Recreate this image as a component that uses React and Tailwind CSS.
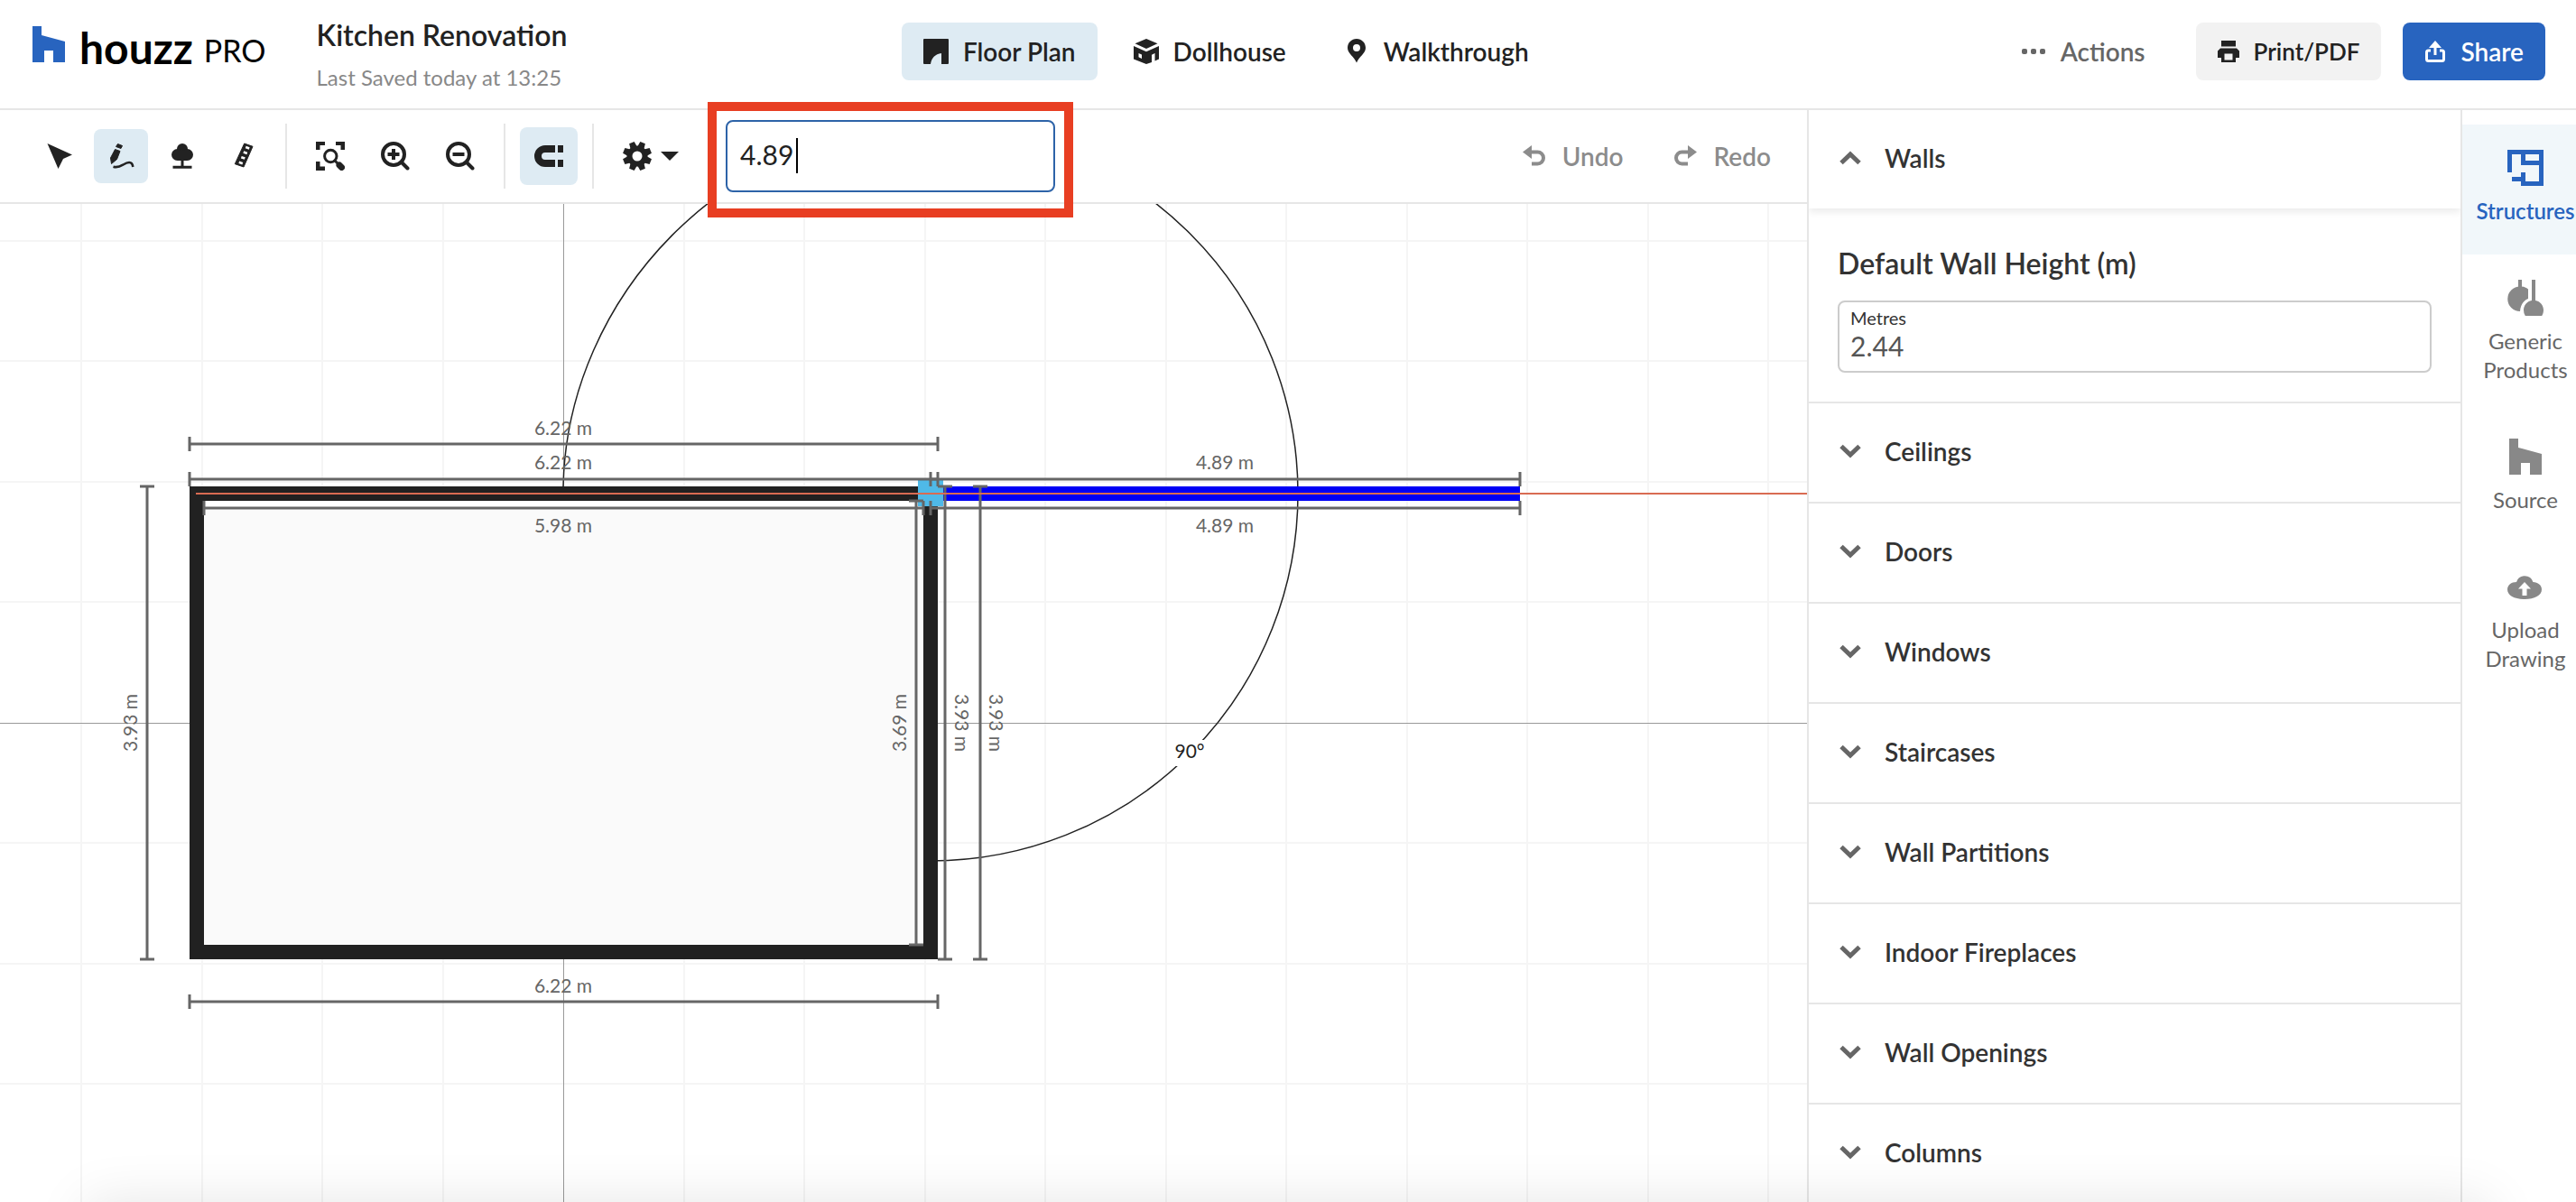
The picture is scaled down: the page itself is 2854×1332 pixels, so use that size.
import React, { useState } from "react";

const SECTIONS = [
  "Ceilings",
  "Doors",
  "Windows",
  "Staircases",
  "Wall Partitions",
  "Indoor Fireplaces",
  "Wall Openings",
  "Columns",
];

const GRID_X = [90, 224, 357, 491, 758, 891, 1025, 1158, 1292, 1425, 1559, 1692, 1826, 1959];
const GRID_Y = [267, 400, 534, 667, 934, 1068, 1201];
const GEAR_TEETH = [22.5, 67.5, 112.5, 157.5, 202.5, 247.5, 292.5, 337.5];

/* ---------- icons ---------- */

function HouzzMark({ className }) {
  return (
    <svg className={className} width="36" height="40" viewBox="0 0 36 40" fill="currentColor">
      <path d="M0 0h10v10l26 7v23H23V27H13v13H0z" />
    </svg>
  );
}

function CursorIcon() {
  return (
    <svg width="32" height="32" viewBox="0 0 32 32" fill="currentColor">
      <path d="M2.5 2 30 14.5 20 19 14.5 30z" />
    </svg>
  );
}

function DrawIcon() {
  return (
    <svg width="32" height="32" viewBox="0 0 32 32" fill="currentColor">
      <path d="M12.5 2.500 17.500 4.500 16 7.500 10.500 5.500z" stroke="currentColor" strokeLinejoin="round" />
      <path d="M9.500 8.500 15 10.500 11.500 19.500 5.500 24.500 4.500 18z" stroke="currentColor" strokeLinejoin="round" />
      <path d="M7.500 27.700c5 1.600 8-.4 11-2.200 4-2.500 10-5 10.800 2.500" fill="none" stroke="currentColor" strokeWidth="2.600" />
    </svg>
  );
}

function TreeIcon() {
  return (
    <svg width="32" height="32" viewBox="0 0 32 32" fill="currentColor">
      <circle cx="16" cy="8" r="6" />
      <circle cx="10.500" cy="14.500" r="6.500" />
      <circle cx="21.500" cy="14.500" r="6.500" />
      <path d="M11 10h10v11H11zM14.500 20h3v7h-3zM5.500 26.700h21v3h-21z" />
    </svg>
  );
}

function RulerIcon() {
  return (
    <svg width="32" height="32" viewBox="0 0 32 32" fill="currentColor">
      <path d="M16.700 2 26 5.300 16 28 6.300 24.700z" stroke="currentColor" strokeLinejoin="round" />
      <path
        d="m18.200 6 4 1.400M15.800 11.600l4 1.400M13.300 17.200l4 1.400M10.800 22.800l4 1.400"
        stroke="#fff"
        strokeWidth="2.600"
      />
    </svg>
  );
}

function ZoomFitIcon() {
  return (
    <svg width="32" height="32" viewBox="0 0 32 32" fill="currentColor">
      <path d="M0 0h10v4H4.500v5H0zM22 0h10v9h-4.500V4H22zM0 22h4.500v5.500H10V32H0z" />
      <g fill="none" stroke="currentColor" strokeLinecap="round">
        <circle cx="16.300" cy="16" r="6.700" strokeWidth="3" />
        <path d="m21 21 3 3" strokeWidth="3" />
        <path d="m26 26 2.500 2.500" strokeWidth="7" />
      </g>
    </svg>
  );
}

function ZoomIcon({ plus }) {
  return (
    <svg width="32" height="32" viewBox="0 0 32 32" fill="none" stroke="currentColor" strokeWidth="4">
      <circle cx="14" cy="14" r="12" />
      <path d="m22.500 22.500 7 7" strokeLinecap="round" />
      <path d={plus ? "M7.500 14h13M14 8v12" : "M7.500 14h13"} />
    </svg>
  );
}

function MagnetIcon() {
  return (
    <svg width="32" height="32" viewBox="0 0 32 32" fill="currentColor">
      <path d="M23 4H12a12 12 0 0 0 0 24h11v-8H12a4 4 0 0 1 0-8h11zM26 4h6v8h-6zM26 20h6v8h-6z" />
    </svg>
  );
}

function GearIcon() {
  return (
    <svg width="32" height="32" viewBox="-16 -16 32 32" fill="currentColor">
      <circle r="8.500" fill="none" stroke="currentColor" strokeWidth="6" />
      {GEAR_TEETH.map((a) => (
        <path key={a} d="M-3 -16h6l1 7h-8z" transform={`rotate(${a})`} />
      ))}
    </svg>
  );
}

function CaretDownIcon() {
  return (
    <svg width="20" height="10" viewBox="0 0 20 10" fill="currentColor">
      <path d="M0 0h20L10 10z" />
    </svg>
  );
}

function FloorPlanIcon() {
  return (
    <svg width="28" height="28" viewBox="0 0 28 28" fill="currentColor">
      <path d="M1 0h26a1 1 0 0 1 1 1v26a1 1 0 0 1-1 1h-7V16C13 17 9 21 8 28H1a1 1 0 0 1-1-1V1a1 1 0 0 1 1-1z" />
    </svg>
  );
}

function DollhouseIcon() {
  return (
    <svg width="28" height="28" viewBox="0 0 28 28" fill="currentColor">
      <path d="M14 0 26.500 5.300 14 11 1.500 5.300z" />
      <path
        fillRule="evenodd"
        d="M0 8l14 6.200L28 8v14.500l-4.500 2V16L20 17.700V26l-6 2L0 22.500zM5.500 16v4.300L9 22v-4.400z"
      />
    </svg>
  );
}

function PinIcon() {
  return (
    <svg width="28" height="28" viewBox="0 0 28 28" fill="currentColor">
      <path
        fillRule="evenodd"
        d="M14 0c5.600 0 10 4.400 10 10 0 6.500-7 9-10 16.500C11 19 4 16.500 4 10 4 4.400 8.400 0 14 0zm0 6a4 4 0 1 0 0 8 4 4 0 0 0 0-8z"
      />
    </svg>
  );
}

function DotsIcon() {
  return (
    <svg width="28" height="24" viewBox="0 0 28 24" fill="currentColor">
      <rect x="1" y="9" width="6" height="6" rx="2" />
      <rect x="11" y="9" width="6" height="6" rx="2" />
      <rect x="21" y="9" width="6" height="6" rx="2" />
    </svg>
  );
}

function PrinterIcon() {
  return (
    <svg width="24" height="24" viewBox="0 0 24 24" fill="currentColor">
      <path d="M4 0h16v6.500H4z" />
      <path fillRule="evenodd" d="M3 8.500h18l3 3V19h-4v5H4v-5H0v-7.500zM7.500 14.500v7h9v-7z" />
    </svg>
  );
}

function ShareIcon() {
  return (
    <svg width="24" height="24" viewBox="0 0 24 24" fill="none" stroke="currentColor" strokeWidth="3">
      <path d="M7 11H4.500a2 2 0 0 0-2 2v7.500a2 2 0 0 0 2 2h15a2 2 0 0 0 2-2V13a2 2 0 0 0-2-2H17" />
      <path d="M12 16V5" />
      <path d="M12 0l7 8H5z" fill="currentColor" stroke="none" />
    </svg>
  );
}

function UndoIcon({ className }) {
  return (
    <svg className={className} width="26" height="24" viewBox="0 0 26 24" fill="none">
      <path d="M10 0v15L0 7.500z" fill="currentColor" />
      <path d="M8 7.500h8.500a6.500 6.500 0 0 1 0 13H10" stroke="currentColor" strokeWidth="4" />
    </svg>
  );
}

function Chevron({ open }) {
  return (
    <svg
      className={open ? "rotate-180" : ""}
      width="24"
      height="16"
      viewBox="0 0 24 16"
      fill="none"
      stroke="#666"
      strokeWidth="5"
    >
      <path d="M2 2.500l10 9.500 10-9.500" />
    </svg>
  );
}

function StructuresIcon() {
  return (
    <svg width="40" height="40" viewBox="0 0 40 40" fill="none" stroke="currentColor" strokeWidth="5">
      <path d="M2.500 25V2.500h35v35h-20V25M17.500 5v9.500H36M5 32.500h10" />
    </svg>
  );
}

function PendantIcon() {
  return (
    <svg width="40" height="40" viewBox="0 0 40 40" fill="#888">
      <path d="M12 0h4v8h-4z" />
      <path d="M14 7.500c3.500 0 6.500 1 9 3V21c-5 2-8.500 7-9 14a13.700 13.700 0 0 1 0-27.500z" />
      <path d="M27 0h4v23c5.500 1 9 5.500 9 10.500 0 2.500-.6 4.700-1.800 6.500H19.800a11.500 11.500 0 0 1-1.800-6.500c0-5 3.500-9.500 9-10.500z" />
    </svg>
  );
}

function UploadIcon() {
  return (
    <svg width="40" height="40" viewBox="0 0 40 40" fill="#888">
      <path d="M10 15a9.600 9.600 0 0 1 18.400 0c5.500.2 9.600 3.500 9.600 8.300C38 30 30 34 19.200 34 8 34 0 30 0 23.300 0 18.500 4.300 15 10 15z" />
      <path d="M19 15l7 7.500h-4.500V30h-5v-7.500H12z" fill="#fff" />
    </svg>
  );
}

/* ---------- header ---------- */

function Tab({ icon, label, active }) {
  return (
    <button
      className={`flex h-16 items-center gap-4 rounded-lg px-6 text-[28px] font-semibold whitespace-nowrap ${
        active ? "bg-[#deebf3]" : ""
      }`}
    >
      {icon}
      {label}
    </button>
  );
}

function Header() {
  return (
    <header className="flex h-[122px] items-start border-b-2 border-[#e6e6e6]">
      <div className="flex w-[35%] items-start pl-9">
        <a href="#home" className="mt-[29px] flex items-start text-black">
          <HouzzMark className="text-[#2864bf]" />
          <span className="ml-4 text-[48px]/[48px] font-bold">houzz</span>
          <span className="ml-3 text-[34px]/[54px]">PRO</span>
        </a>
        <div className="mt-[18px] ml-14">
          <h1 className="text-[32px]/[42px] font-semibold">Kitchen Renovation</h1>
          <p className="mt-2 text-[24px]/[36px] text-[#888]">Last Saved today at 13:25</p>
        </div>
      </div>
      <nav className="mt-[25px] flex gap-4">
        <Tab icon={<FloorPlanIcon />} label="Floor Plan" active />
        <Tab icon={<DollhouseIcon />} label="Dollhouse" />
        <Tab icon={<PinIcon />} label="Walkthrough" />
      </nav>
      <div className="mt-[25px] mr-[34px] ml-auto flex gap-6 text-[28px] font-semibold">
        <button className="flex h-16 items-center gap-4 px-8 text-[#666]">
          <DotsIcon />
          Actions
        </button>
        <button className="flex h-16 items-center gap-4 rounded-lg bg-[#f2f2f2] px-6 text-[26px]">
          <PrinterIcon />
          Print/PDF
        </button>
        <button className="flex h-16 items-center gap-4 rounded-lg bg-[#2864bf] px-6 text-white">
          <ShareIcon />
          Share
        </button>
      </div>
    </header>
  );
}

/* ---------- toolbar ---------- */

function ToolButton({ label, active, large, children }) {
  return (
    <button
      aria-label={label}
      className={`flex shrink-0 items-center justify-center rounded-lg ${
        large ? "h-16 w-16" : "h-[60px] w-[60px]"
      } ${active ? "bg-[#deebf3]" : ""}`}
    >
      {children}
    </button>
  );
}

function Divider() {
  return <div className="mx-4 h-[72px] w-[2px] bg-[#e6e6e6]" />;
}

function Toolbar({ length, setLength }) {
  return (
    <div className="flex h-[104px] items-center border-b-2 border-[#e6e6e6] px-9">
      <div className="flex gap-2">
        <ToolButton label="Select"><CursorIcon /></ToolButton>
        <ToolButton label="Draw walls" active><DrawIcon /></ToolButton>
        <ToolButton label="Landscape"><TreeIcon /></ToolButton>
        <ToolButton label="Measure"><RulerIcon /></ToolButton>
      </div>
      <Divider />
      <div className="flex gap-2">
        <ToolButton label="Fit to screen" large><ZoomFitIcon /></ToolButton>
        <ToolButton label="Zoom in" large><ZoomIcon plus /></ToolButton>
        <ToolButton label="Zoom out" large><ZoomIcon /></ToolButton>
      </div>
      <Divider />
      <ToolButton label="Snap" large active><MagnetIcon /></ToolButton>
      <Divider />
      <button aria-label="Settings" className="flex h-16 items-center gap-[10px] px-4">
        <GearIcon />
        <CaretDownIcon />
      </button>

      <div className="relative ml-9">
        <input
          aria-label="Wall length"
          value={length}
          onChange={(e) => setLength(e.target.value)}
          className="block h-20 w-[365px] rounded-lg border-2 border-[#2d63a8] bg-white px-[14px] pb-1 text-[30px] caret-transparent outline-none"
        />
        <span className="absolute top-5 left-[78px] h-[39px] w-[2px] bg-black" />
        {/* highlight around the length field */}
        <div className="pointer-events-none absolute -top-5 -right-5 -bottom-7 -left-5 border-[10px] border-[#e83e22]" />
      </div>

      <div className="ml-auto flex gap-12 text-[28px] font-semibold text-[#8c8c8c]">
        <button className="flex items-center gap-[18px] px-1">
          <UndoIcon />
          Undo
        </button>
        <button className="flex items-center gap-[18px] px-1">
          <UndoIcon className="-scale-x-100" />
          Redo
        </button>
      </div>
    </div>
  );
}

/* ---------- plan ---------- */

function HDim({ x1, x2, y }) {
  return <path d={`M${x1} ${y}H${x2}M${x1} ${y - 8}v16M${x2} ${y - 8}v16`} />;
}

function VDim({ x, y1, y2 }) {
  return <path d={`M${x} ${y1}V${y2}M${x - 8} ${y1}h16M${x - 8} ${y2}h16`} />;
}

function Plan() {
  return (
    <svg
      className="block min-h-0 w-full flex-1"
      viewBox="0 226 2002 1106"
      preserveAspectRatio="xMinYMin slice"
      fontSize="21"
    >
      <g stroke="#f5f5f5" strokeWidth="2">
        {GRID_X.map((x) => <path key={x} d={`M${x} 226V1332`} />)}
        {GRID_Y.map((y) => <path key={y} d={`M0 ${y}H2002`} />)}
      </g>
      <path d="M624.500 226V1332M0 801.500H2002" stroke="#999" />

      {/* room */}
      <path d="M218 547H1031V1055H218z" fill="#fafafa" stroke="#212121" strokeWidth="16" />
      <path d="M226 559H1023" stroke="#fff" strokeWidth="8" />

      {/* angle between the two walls */}
      <path d="M624 539C628 330 805 140 1031 140A407 407 0 0 1 1031 954" fill="none" stroke="#222" strokeWidth="1.500" />
      <path d="M1301 820h36v29h-36z" fill="#fff" />
      <text x="1318" y="840" textAnchor="middle" fill="#222">90°</text>

      {/* wall being drawn */}
      <path d="M1031 547H1684" stroke="#0000f5" strokeWidth="16" />
      <path d="M1017 532h28v29h-28z" fill="#4fb9e8" />

      <g fill="none" stroke="#666" strokeWidth="3">
        <HDim x1={210} x2={1039} y={492} />
        <HDim x1={210} x2={1039} y={531} />
        <HDim x1={1031} x2={1684} y={531} />
        <HDim x1={226} x2={1023} y={563} />
        <HDim x1={1031} x2={1684} y={563} />
        <HDim x1={210} x2={1039} y={1110} />
        <VDim x={163} y1={539} y2={1063} />
        <VDim x={1015} y1={555} y2={1047} />
        <VDim x={1047} y1={539} y2={1063} />
        <VDim x={1086} y1={539} y2={1063} />
      </g>
      <path d="M217 547H2002" stroke="#d96b52" strokeWidth="2" />

      <g fill="#666" textAnchor="middle">
        <text x="624" y="482">6.22 m</text>
        <text x="624" y="520">6.22 m</text>
        <text x="624" y="590">5.98 m</text>
        <text x="624" y="1100">6.22 m</text>
        <text x="1357" y="520">4.89 m</text>
        <text x="1357" y="590">4.89 m</text>
        <text transform="translate(152 801) rotate(-90)">3.93 m</text>
        <text transform="translate(1004 801) rotate(-90)">3.69 m</text>
        <text transform="translate(1058 801) rotate(90)">3.93 m</text>
        <text transform="translate(1096 801) rotate(90)">3.93 m</text>
      </g>
    </svg>
  );
}

/* ---------- side panels ---------- */

function SectionButton({ label, open }) {
  return (
    <button className="flex h-[109px] w-full items-center gap-[26px] px-[34px] pb-1 text-left text-[28px] font-semibold">
      <Chevron open={open} />
      {label}
    </button>
  );
}

function StructuresPanel() {
  const [height, setHeight] = useState("2.44");

  return (
    <aside className="w-[724px] shrink-0 overflow-hidden border-l-2 border-[#e6e6e6] text-[#333]">
      <div className="shadow-[0_4px_8px_rgba(0,0,0,0.08)]">
        <SectionButton label="Walls" open />
      </div>
      <div className="px-8 pt-[42px] pb-8">
        <h2 className="text-[32px]/[38px] font-semibold">Default Wall Height (m)</h2>
        <div className="mt-[22px] h-20 rounded-lg border-2 border-[#ccc] px-3 pt-1">
          <label htmlFor="wall-height" className="block text-[20px]/[26px]">Metres</label>
          <input
            id="wall-height"
            value={height}
            onChange={(e) => setHeight(e.target.value)}
            className="block h-9 w-full bg-transparent text-[30px]/[36px] text-[#555] outline-none"
          />
        </div>
      </div>
      {SECTIONS.map((s) => (
        <div key={s} className="border-t-2 border-[#e6e6e6]">
          <SectionButton label={s} />
        </div>
      ))}
    </aside>
  );
}

function RailItem({ icon, label, active }) {
  return (
    <button
      className={`flex w-[140px] flex-col items-center gap-3 px-4 pt-7 pb-8 text-center text-[24px]/[32px] ${
        active ? "bg-[#f1f7fa] font-semibold text-[#2864bf]" : "text-[#666]"
      }`}
    >
      {icon}
      <span>{label}</span>
    </button>
  );
}

function Rail() {
  return (
    <nav className="w-32 shrink-0 overflow-hidden border-l-2 border-[#e6e6e6] pt-4">
      <RailItem icon={<StructuresIcon />} label="Structures" active />
      <RailItem icon={<PendantIcon />} label="Generic Products" />
      <RailItem icon={<HouzzMark className="text-[#888]" />} label="Source" />
      <RailItem icon={<UploadIcon />} label="Upload Drawing" />
    </nav>
  );
}

function App() {
  const [length, setLength] = useState("4.89");

  return (
    <div className="relative flex h-screen flex-col overflow-hidden bg-white font-[Lato,'Open_Sans',sans-serif] text-[#222]">
      <Header />
      <div className="flex min-h-0 flex-1">
        <main className="flex min-w-0 flex-1 flex-col">
          <Toolbar length={length} setLength={setLength} />
          <Plan />
        </main>
        <StructuresPanel />
        <Rail />
      </div>
      <div className="pointer-events-none absolute inset-x-24 -bottom-20 h-20 shadow-[0_0_60px_rgba(0,0,0,0.1)]" />
    </div>
  );
}

export default App;
